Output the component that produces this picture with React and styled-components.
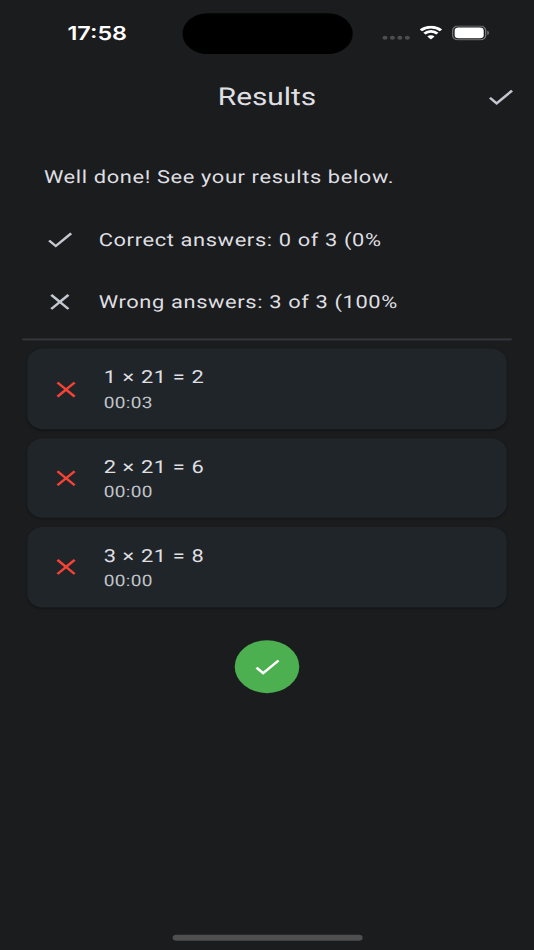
import React from 'react';
import styled, { createGlobalStyle } from 'styled-components';

const questions = [
  { id: 1, text: '1 × 21 = 2', time: '00:03' },
  { id: 2, text: '2 × 21 = 6', time: '00:00' },
  { id: 3, text: '3 × 21 = 8', time: '00:00' },
];

const CheckIcon = ({ color = '#c3c7cf' }) => (
  <svg width="26.4" height="26.4" viewBox="0 0 24 24" fill={color}>
    <path d="M9 16.17 4.83 12l-1.42 1.41L9 19 21 7l-1.41-1.41z" />
  </svg>
);

const CloseIcon = ({ color = '#c3c7cf' }) => (
  <svg width="26.4" height="26.4" viewBox="0 0 24 24" fill={color}>
    <path d="M19 6.41 17.59 5 12 10.59 6.41 5 5 6.41 10.59 12 5 17.59 6.41 19 12 13.41 17.59 19 19 17.59 13.41 12z" />
  </svg>
);

const WifiIcon = () => (
  <svg width="18" height="14" viewBox="0 0 18 14" fill="none" stroke="#fff" strokeWidth="2.7">
    <path d="M0.9 4.8A11.6 11.6 0 0 1 17.1 4.8" />
    <path d="M3.8 8A7.4 7.4 0 0 1 14.2 8" />
    <path d="M6.1 10.7A4.1 4.1 0 0 1 11.9 10.7L9 13.7Z" fill="#fff" stroke="none" />
  </svg>
);

const BatteryIcon = () => (
  <svg width="30" height="15" viewBox="0 0 30 15">
    <rect x="0.5" y="0.5" width="26.6" height="13.6" rx="4.3" fill="none" stroke="#77787a" />
    <rect x="2.1" y="2.1" width="23.4" height="10.4" rx="3" fill="#fff" />
    <path d="M28.4 5.2v4.2a2.3 2.3 0 0 0 0-4.2" fill="#77787a" />
  </svg>
);

const App = () => {
  return (
    <>
      <GlobalStyle />
      <Viewport>
        <Phone>
          <StatusBar>
            <Time>17:58</Time>
            <Island />
            <Indicators>
              <Signal>
                <Dot />
                <Dot />
                <Dot />
                <Dot />
              </Signal>
              <WifiIcon />
              <BatteryIcon />
            </Indicators>
          </StatusBar>
          <AppBar>
            <Title>Results</Title>
            <CheckIcon />
          </AppBar>
          <Summary>
            <SummaryRow>Well done! See your results below.</SummaryRow>
            <SummaryRow>
              <CheckIcon />
              <span>Correct answers: 0 of 3 (0%</span>
            </SummaryRow>
            <SummaryRow>
              <CloseIcon />
              <span>Wrong answers: 3 of 3 (100%</span>
            </SummaryRow>
          </Summary>
          <Divider />
          <List>
            {questions.map((q) => (
              <Card key={q.id}>
                <CloseIcon color="#f44336" />
                <CardText>
                  <Question>{q.text}</Question>
                  <Duration>{q.time}</Duration>
                </CardText>
              </Card>
            ))}
          </List>
          <DoneButton aria-label="Done">
            <CheckIcon color="#fff" />
          </DoneButton>
          <HomeIndicator />
        </Phone>
      </Viewport>
    </>
  );
};

export default App;

const GlobalStyle = createGlobalStyle`
  * {
    box-sizing: border-box;
  }

  body {
    margin: 0;
    background: #1b1c1e;
  }

  svg {
    display: block;
    flex-shrink: 0;
  }
`;

const Viewport = styled.div`
  width: 534px;
  height: 950px;
  overflow: hidden;
  background: #1b1c1e;
`;

// 430x932 screen stretched over the viewport
const Phone = styled.main`
  display: flex;
  flex-direction: column;
  width: 430px;
  height: 932px;
  transform: scale(1.24186, 1.01931);
  transform-origin: 0 0;
  color: #dfdfe2;
  font-family: Roboto, sans-serif;
  text-rendering: geometricPrecision;
  -webkit-font-smoothing: antialiased;
`;

const StatusBar = styled.header`
  display: grid;
  grid-template-columns: 146.5px 137px 1fr;
  height: 59px;
  padding-top: 12.5px;
`;

const Time = styled.div`
  padding: 9.1px 0 0 54.3px;
  color: #fff;
  font-family: Inter, sans-serif;
  font-size: 18.8px;
  font-weight: 600;
  line-height: 22px;
`;

const Island = styled.div`
  height: 40px;
  border-radius: 20px;
  background: #000;
`;

const Indicators = styled.div`
  display: flex;
  align-items: flex-start;
  padding: 12px 0 0 24.8px;

  svg:last-child {
    margin-left: 8.5px;
  }
`;

const Signal = styled.div`
  display: flex;
  gap: 1.8px;
  padding-top: 10.3px;
  margin-right: 7.9px;
`;

const Dot = styled.span`
  width: 4.1px;
  height: 4.1px;
  border-radius: 50%;
  background: #4d4e50;
`;

const AppBar = styled.div`
  display: grid;
  grid-template-columns: 1fr auto 1fr;
  align-items: center;
  height: 72px;
  padding-right: 13.3px;

  svg {
    justify-self: end;
  }
`;

const Title = styled.h1`
  grid-column: 2;
  margin: 0;
  padding-left: 13.3px;
  font-size: 24px;
  font-weight: 400;
`;

const Summary = styled.section`
  padding: 13.6px 36px 0 35.4px;
`;

const SummaryRow = styled.div`
  display: flex;
  align-items: center;
  gap: 17.7px;
  height: 60.9px;
  font-size: 17.6px;
  letter-spacing: 0.5px;
  white-space: nowrap;

  svg {
    margin-bottom: 1px;
  }
`;

const Divider = styled.hr`
  width: 394px;
  height: 2px;
  margin: 4.4px 18px 0;
  border: 0;
  background: #34363b;
`;

const List = styled.div`
  display: flex;
  flex-direction: column;
  gap: 8.8px;
  padding: 8.8px 22px 0;
`;

const Card = styled.article`
  display: flex;
  align-items: center;
  gap: 17.5px;
  height: 78.6px;
  padding-left: 17.6px;
  border-radius: 13px;
  background: #202529;
  box-shadow: 0 1px 2px rgba(0, 0, 0, 0.3);
`;

const CardText = styled.div`
  padding-top: 2.4px;
`;

const Question = styled.div`
  font-size: 17.6px;
  line-height: 26px;
  letter-spacing: 0.5px;
`;

const Duration = styled.div`
  color: #c0c4cb;
  font-size: 15.4px;
  line-height: 23px;
  letter-spacing: 0.25px;
`;

const DoneButton = styled.button`
  display: flex;
  align-items: center;
  justify-content: center;
  width: 52.6px;
  height: 52.6px;
  margin: 31.8px auto 0;
  padding: 0;
  border: 0;
  border-radius: 50%;
  background: #4caf50;
`;

const HomeIndicator = styled.div`
  width: 153px;
  height: 5.6px;
  margin: auto auto 9px;
  border-radius: 3px;
  background: #4f4f50;
`;
